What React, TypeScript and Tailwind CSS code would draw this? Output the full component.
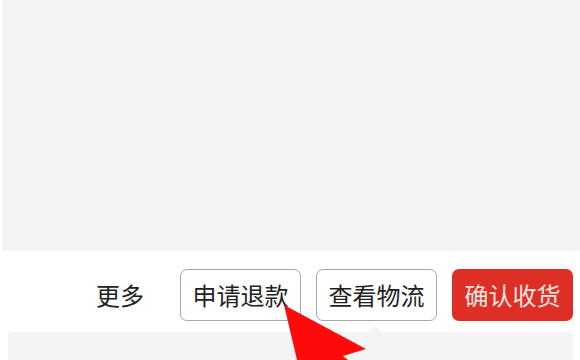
import React from "react";

const font = { fontFamily: '"Noto Sans CJK SC", "Noto Sans", sans-serif' };

export default function App() {
  return (
    <div className="relative w-[580px] h-[360px] overflow-hidden bg-white" style={font}>
      <div className="ml-[2px] h-[251px] bg-[#f3f3f3]" />
      <div className="flex items-center justify-end pt-[18px] pr-[7px] gap-[15px]">
        <span className="mr-[21px] text-[24px] leading-none text-[#222]">更多</span>
        <button className="w-[121px] h-[52px] rounded-[7px] border border-[#a8a8a8] bg-white text-[24px] text-[#222] flex items-center justify-center">
          申请退款
        </button>
        <button className="w-[121px] h-[52px] rounded-[7px] border border-[#a8a8a8] bg-white text-[24px] text-[#222] flex items-center justify-center">
          查看物流
        </button>
        <button className="w-[121px] h-[52px] rounded-[7px] bg-[#de2f27] text-[24px] text-[#fde6e3] flex items-center justify-center">
          确认收货
        </button>
      </div>
      <div className="relative mt-[11px] ml-[8px] mr-[7px] h-[40px] rounded-t-[4px] bg-[#f4f4f4]">
        <div className="absolute left-[360px] top-[-6px] w-0 h-0 border-l-[7px] border-r-[7px] border-b-[6px] border-l-transparent border-r-transparent border-b-[#f4f4f4]" />
      </div>
      <svg className="absolute left-0 top-0 pointer-events-none" width="580" height="360" viewBox="0 0 580 360">
        <polygon points="284,305 366,349 343,356 348,360 297,360" fill="#ff0a0a" />
      </svg>
    </div>
  );
}
